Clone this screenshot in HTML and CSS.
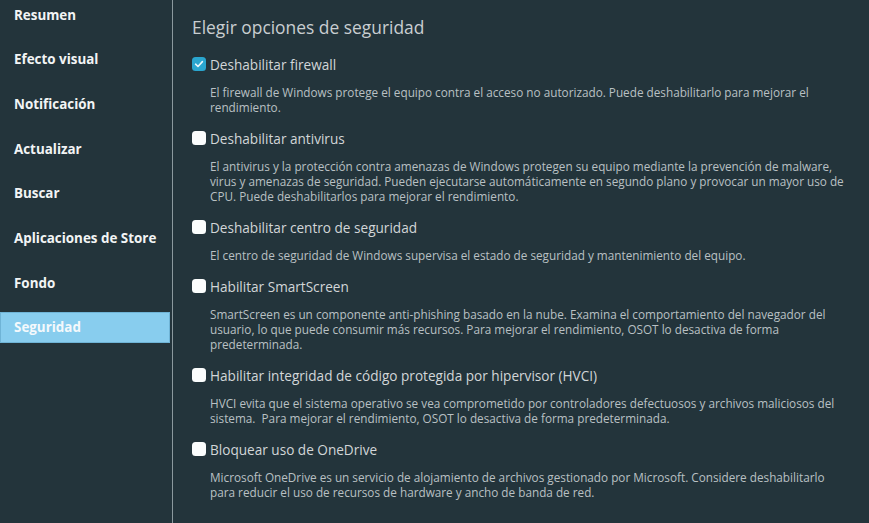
FILE: index.html
```html
<!DOCTYPE html>
<html lang="es">
<head>
<meta charset="utf-8">
<title>Seguridad</title>
<link rel="stylesheet" href="styles.css">
</head>
<body>
<div class="app">
  <nav class="sidebar">
    <div class="nav-item">Resumen</div>
    <div class="nav-item">Efecto visual</div>
    <div class="nav-item">Notificación</div>
    <div class="nav-item">Actualizar</div>
    <div class="nav-item">Buscar</div>
    <div class="nav-item">Aplicaciones de Store</div>
    <div class="nav-item">Fondo</div>
    <div class="nav-item active">Seguridad</div>
  </nav>
  <main class="content">
    <h1 class="title">Elegir opciones de seguridad</h1>

    <div class="option">
      <label class="opt-label"><span class="box checked"><svg viewBox="0 0 14 14" width="14" height="14"><path d="M3.6 7.2 L6 9.5 L10.4 4.6" fill="none" stroke="#e8f6fb" stroke-width="1.6" stroke-linecap="round" stroke-linejoin="round"/></svg></span>Deshabilitar firewall</label>
      <p class="desc">El firewall de Windows protege el equipo contra el acceso no autorizado. Puede deshabilitarlo para mejorar el<br>rendimiento.</p>
    </div>

    <div class="option">
      <label class="opt-label"><span class="box"></span>Deshabilitar antivirus</label>
      <p class="desc">El antivirus y la protección contra amenazas de Windows protegen su equipo mediante la prevención de malware,<br>virus y amenazas de seguridad. Pueden ejecutarse automáticamente en segundo plano y provocar un mayor uso de<br>CPU. Puede deshabilitarlos para mejorar el rendimiento.</p>
    </div>

    <div class="option">
      <label class="opt-label"><span class="box"></span>Deshabilitar centro de seguridad</label>
      <p class="desc">El centro de seguridad de Windows supervisa el estado de seguridad y mantenimiento del equipo.</p>
    </div>

    <div class="option">
      <label class="opt-label"><span class="box"></span>Habilitar SmartScreen</label>
      <p class="desc">SmartScreen es un componente anti-phishing basado en la nube. Examina el comportamiento del navegador del<br>usuario, lo que puede consumir más recursos. Para mejorar el rendimiento, OSOT lo desactiva de forma<br>predeterminada.</p>
    </div>

    <div class="option">
      <label class="opt-label"><span class="box"></span>Habilitar integridad de código protegida por hipervisor (HVCI)</label>
      <p class="desc">HVCI evita que el sistema operativo se vea comprometido por controladores defectuosos y archivos maliciosos del<br>sistema.&nbsp; Para mejorar el rendimiento, OSOT lo desactiva de forma predeterminada.</p>
    </div>

    <div class="option">
      <label class="opt-label"><span class="box"></span>Bloquear uso de OneDrive</label>
      <p class="desc">Microsoft OneDrive es un servicio de alojamiento de archivos gestionado por Microsoft. Considere deshabilitarlo<br>para reducir el uso de recursos de hardware y ancho de banda de red.</p>
    </div>
  </main>
</div>
</body>
</html>
```

FILE: styles.css
```css
html, body {
  margin: 0;
  padding: 0;
  height: 100%;
  background: #23343b;
  overflow: hidden;
}
body {
  font-family: "Open Sans", "Noto Sans", sans-serif;
}
.app {
  display: flex;
  height: 523px;
}
.sidebar {
  width: 170px;
  padding-right: 2px;
  border-right: 1px solid #8b999e;
  display: flex;
  flex-direction: column;
  margin-top: -1px;
}
.nav-item {
  height: 31px;
  margin-bottom: 13.7px;
  display: flex;
  align-items: center;
  padding-left: 14px;
  font-size: 13.4px;
  font-weight: 700;
  color: #f2f4f5;
  box-sizing: border-box;
  white-space: nowrap;
}
.nav-item.active {
  background: #88cdee;
  border: 1px solid #6fb4d6;
  padding-left: 13px;
  color: #f4f9fc;
}
.content {
  flex: 1;
  padding: 15px 0 0 19px;
}
.title {
  margin: 0 0 15px 0;
  height: 24px;
  line-height: 24px;
  font-size: 17.4px;
  font-weight: 400;
  color: #c9ced1;
}
.option {
  margin-bottom: 13px;
}
.opt-label {
  display: flex;
  align-items: center;
  height: 20px;
  font-size: 13.6px;
  color: #d2d6d8;
  margin-bottom: 11px;
  white-space: nowrap;
}
.box {
  width: 14px;
  height: 14px;
  border-radius: 3.5px;
  background: #fbfdfd;
  margin-right: 4px;
  flex: none;
  display: flex;
}
.box.checked {
  background: #2aa6cf;
}
.desc {
  margin: 0 0 0 18px;
  font-size: 11.75px;
  line-height: 15px;
  color: #b9c0c3;
  white-space: nowrap;
}
```
